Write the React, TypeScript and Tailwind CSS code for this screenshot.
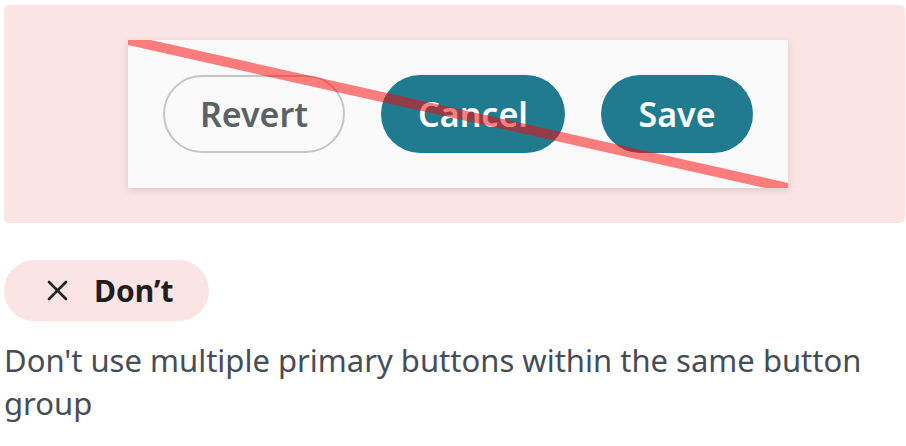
export default function App() {
  return (
    <div className="w-[906px] h-[446px] bg-white pl-[4px] pt-[5px] pr-[1px] font-['Noto_Sans',sans-serif] overflow-hidden">
      <div className="h-[218px] rounded-[5px] bg-[#fce4e4] flex items-center justify-center pl-[7px]">
        <div className="relative overflow-hidden bg-[#fafafa] shadow-[0_2px_8px_rgba(0,0,0,0.12)] flex items-center gap-[36px] p-[35px]">
          <button className="h-[78px] w-[182px] rounded-full border-2 border-[#c6c6c6] text-[#5c6168] text-[34px] font-semibold leading-none">
            Revert
          </button>
          <button className="h-[78px] w-[184px] rounded-full bg-[#217b90] text-white text-[34px] font-semibold leading-none">
            Cancel
          </button>
          <button className="h-[78px] w-[152px] rounded-full bg-[#217b90] text-white text-[34px] font-semibold leading-none">
            Save
          </button>
          <svg
            className="absolute inset-0 w-full h-full pointer-events-none"
            viewBox="0 0 660 148"
            preserveAspectRatio="none"
          >
            <line x1="0" y1="0" x2="660" y2="148" stroke="rgba(255,0,0,0.5)" strokeWidth="10" />
          </svg>
        </div>
      </div>
      <div className="mt-[37px] inline-flex items-center h-[61px] rounded-full bg-[#fce4e4] pl-[43px] pr-[36px] gap-[26px]">
        <svg width="21" height="21" viewBox="0 0 21 21" fill="none" stroke="#222" strokeWidth="2.6" strokeLinecap="round">
          <line x1="2" y1="2" x2="19" y2="19" />
          <line x1="19" y1="2" x2="2" y2="19" />
        </svg>
        <span className="text-[30px] font-bold text-[#1f1f1f] leading-none">Don’t</span>
      </div>
      <p className="mt-[18px] text-[31px] leading-[43px] text-[#474c55]">
        Don't use multiple primary buttons within the same button group
      </p>
    </div>
  );
}
